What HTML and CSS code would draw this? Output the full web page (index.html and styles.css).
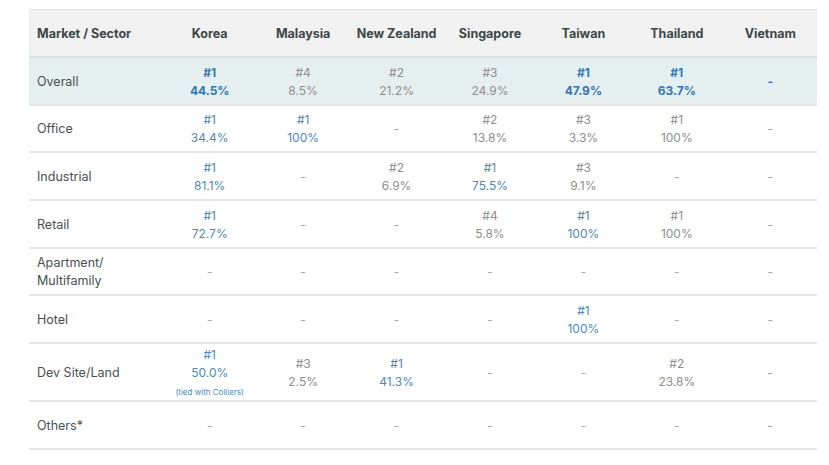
FILE: index.html
```html
<!DOCTYPE html>
<html>
<head>
<meta charset="utf-8">
<link rel="stylesheet" href="styles.css">
</head>
<body>
<div class="wrap">
<table class="tbl">
  <colgroup>
    <col class="c-first">
    <col class="c"><col class="c"><col class="c"><col class="c"><col class="c"><col class="c"><col class="c">
  </colgroup>
  <thead>
    <tr>
      <th class="lbl">Market / Sector</th>
      <th>Korea</th><th>Malaysia</th><th>New Zealand</th><th>Singapore</th><th>Taiwan</th><th>Thailand</th><th>Vietnam</th>
    </tr>
  </thead>
  <tbody>
    <tr class="overall">
      <td class="lbl">Overall</td>
      <td class="blue b">#1<br>44.5%</td>
      <td class="grey">#4<br>8.5%</td>
      <td class="grey">#2<br>21.2%</td>
      <td class="grey">#3<br>24.9%</td>
      <td class="blue b">#1<br>47.9%</td>
      <td class="blue b">#1<br>63.7%</td>
      <td class="blue b">-</td>
    </tr>
    <tr>
      <td class="lbl">Office</td>
      <td class="blue">#1<br>34.4%</td>
      <td class="blue">#1<br>100%</td>
      <td class="dash">-</td>
      <td class="grey">#2<br>13.8%</td>
      <td class="grey">#3<br>3.3%</td>
      <td class="grey">#1<br>100%</td>
      <td class="dash">-</td>
    </tr>
    <tr>
      <td class="lbl">Industrial</td>
      <td class="blue">#1<br>81.1%</td>
      <td class="dash">-</td>
      <td class="grey">#2<br>6.9%</td>
      <td class="blue">#1<br>75.5%</td>
      <td class="grey">#3<br>9.1%</td>
      <td class="dash">-</td>
      <td class="dash">-</td>
    </tr>
    <tr>
      <td class="lbl">Retail</td>
      <td class="blue">#1<br>72.7%</td>
      <td class="dash">-</td>
      <td class="dash">-</td>
      <td class="grey">#4<br>5.8%</td>
      <td class="blue">#1<br>100%</td>
      <td class="grey">#1<br>100%</td>
      <td class="dash">-</td>
    </tr>
    <tr>
      <td class="lbl">Apartment/<br>Multifamily</td>
      <td class="dash">-</td>
      <td class="dash">-</td>
      <td class="dash">-</td>
      <td class="dash">-</td>
      <td class="dash">-</td>
      <td class="dash">-</td>
      <td class="dash">-</td>
    </tr>
    <tr>
      <td class="lbl">Hotel</td>
      <td class="dash">-</td>
      <td class="dash">-</td>
      <td class="dash">-</td>
      <td class="dash">-</td>
      <td class="blue">#1<br>100%</td>
      <td class="dash">-</td>
      <td class="dash">-</td>
    </tr>
    <tr class="dev">
      <td class="lbl">Dev Site/Land</td>
      <td class="blue">#1<br>50.0%<br><span class="note">(tied with Colliers)</span></td>
      <td class="grey">#3<br>2.5%</td>
      <td class="blue">#1<br>41.3%</td>
      <td class="dash">-</td>
      <td class="dash">-</td>
      <td class="grey">#2<br>23.8%</td>
      <td class="dash">-</td>
    </tr>
    <tr>
      <td class="lbl">Others*</td>
      <td class="dash">-</td>
      <td class="dash">-</td>
      <td class="dash">-</td>
      <td class="dash">-</td>
      <td class="dash">-</td>
      <td class="dash">-</td>
      <td class="dash">-</td>
    </tr>
  </tbody>
</table>
</div>
</body>
</html>
```
FILE: styles.css
```css
html, body {
  margin: 0;
  padding: 0;
  background: #ffffff;
}
body {
  font-family: Inter, "Noto Sans", sans-serif;
}
.wrap {
  padding: 9px 12px 0 29px;
}
.tbl {
  width: 788px;
  border-collapse: collapse;
  table-layout: fixed;
  border-top: 1px solid #e2e6e6;
}
.c-first { width: 134px; }
.tbl th {
  height: 46px;
  background: #f1f1f1;
  color: #3c4747;
  font-size: 12.5px;
  font-weight: 700;
  text-align: center;
  padding: 0;
  border-bottom: 2px solid #d9e2e2;
}
.tbl th.lbl, .tbl td.lbl {
  text-align: left;
  padding-left: 8px;
}
.tbl td {
  height: 43.67px;
  padding: 2px 0 0 0;
  text-align: center;
  font-size: 12px;
  line-height: 18px;
  border-bottom: 2px solid #e3e7e7;
}
.tbl td.lbl {
  color: #4a5050;
  font-size: 12.5px;
  line-height: 18px;
}
.overall td { background: #e6efef; }
.dev td { height: 53px; }
.blue { color: #4f88b8; }
.blue.b { color: #3577ad; font-weight: 700; }
.grey { color: #8e8e8e; }
.dash { color: #a8a8a8; }
.note {
  font-size: 8px;
  line-height: 11px;
  display: inline-block;
}
```
